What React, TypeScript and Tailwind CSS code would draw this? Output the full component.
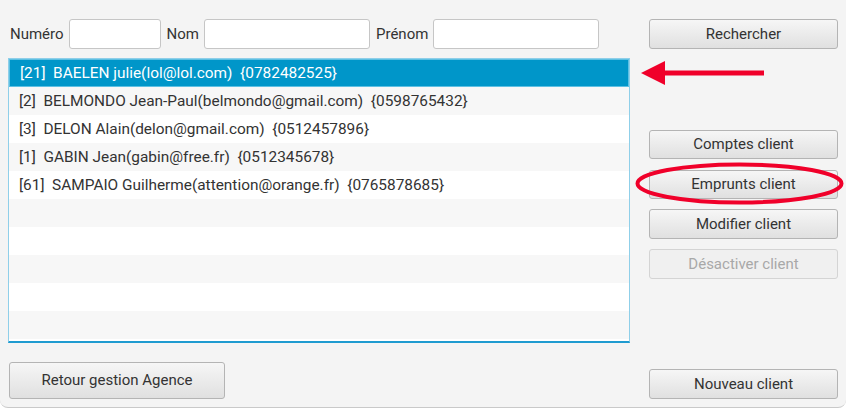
import React from "react";

const clients = [
  "[2]  BELMONDO Jean-Paul(belmondo@gmail.com)  {0598765432}",
  "[3]  DELON Alain(delon@gmail.com)  {0512457896}",
  "[1]  GABIN Jean(gabin@free.fr)  {0512345678}",
  "[61]  SAMPAIO Guilherme(attention@orange.fr)  {0765878685}",
];

const Btn = ({ label, className = "", disabled = false }: { label: string; className?: string; disabled?: boolean }) => (
  <button
    className={`flex items-center justify-center rounded-[3px] border text-[15px] ${
      disabled
        ? "border-[#d4d4d4] bg-[#f0f0f0] text-[#a8a8a8]"
        : "border-[#b4b4b4] bg-gradient-to-b from-[#f6f6f6] to-[#e0e0e0] text-[#333333]"
    } ${className}`}
  >
    {label}
  </button>
);

const Field = ({ w }: { w: string }) => (
  <div className={`h-[30px] rounded-[3px] border border-[#c6c6c6] bg-white ${w}`} />
);

export default function App() {
  // the empty rows under the clients
  const emptyRows = Array.from({ length: 5 }, (_, i) => i);

  return (
    <div className="relative w-[846px] h-[409px] bg-white" style={{ fontFamily: "Roboto, 'Liberation Sans', sans-serif" }}>
      <div className="h-[408px] bg-[#f4f4f4] rounded-b-[8px] border-b border-[#c9c9c9] flex pt-[19px] pl-[8px]">
        {/* left side */}
        <div className="w-[622px] flex flex-col">
          <div className="flex items-center gap-[5px] pl-[2px] text-[15px] text-[#333333]">
            <span>Numéro</span>
            <Field w="w-[92px]" />
            <span className="ml-[1px]">Nom</span>
            <Field w="w-[166px]" />
            <span className="ml-[1px]">Prénom</span>
            <Field w="w-[166px]" />
          </div>

          <div className="mt-[9px] h-[285px] border border-[#8fcfe9] border-b-[2px] border-b-[#1f9bd0] bg-white overflow-hidden text-[15.4px]">
            <div className="h-[28px] flex items-center pl-[10px] pt-[1px] bg-[#0096c9] border border-[#5ec0e3] text-white whitespace-pre">
              {"[21]  BAELEN julie(lol@lol.com)  {0782482525}"}
            </div>
            {clients.map((c, i) => (
              <div
                key={c}
                className={`h-[28px] flex items-center pl-[10px] pt-[1px] text-[#333333] whitespace-pre ${i % 2 === 0 ? "bg-[#f7f7f7]" : "bg-white"}`}
              >
                {c}
              </div>
            ))}
            {emptyRows.map((i) => (
              <div key={i} className={`h-[28px] ${i % 2 === 0 ? "bg-[#f7f7f7]" : "bg-white"}`} />
            ))}
          </div>

          <div className="mt-[19px] pl-[1px]">
            <Btn label="Retour gestion Agence" className="w-[216px] h-[37px]" />
          </div>
        </div>

        {/* right side */}
        <div className="ml-[19px] w-[189px] flex flex-col">
          <Btn label="Rechercher" className="h-[30px]" />
          <Btn label="Comptes client" className="h-[29px] mt-[81px]" />
          <Btn label="Emprunts client" className="h-[29px] mt-[11px]" />
          <Btn label="Modifier client" className="h-[30px] mt-[10px]" />
          <Btn label="Désactiver client" className="h-[30px] mt-[10px]" disabled />
          <Btn label="Nouveau client" className="h-[30px] mt-[90px]" />
        </div>
      </div>

      {/* red annotations */}
      <svg className="absolute left-0 top-0 pointer-events-none" width="846" height="409">
        <polygon points="641,73 665,61 665,85" fill="#f0002a" />
        <rect x="663" y="70.5" width="101" height="5" fill="#f0002a" />
        <ellipse cx="739.5" cy="183.5" rx="102" ry="19" fill="none" stroke="#f0002a" strokeWidth="4" />
      </svg>
    </div>
  );
}
